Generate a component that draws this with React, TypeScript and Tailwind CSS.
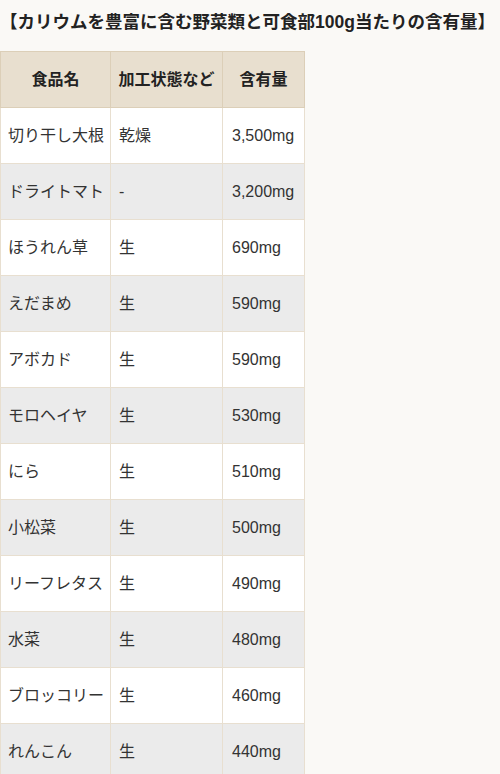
const rows: [string, string, string][] = [
  ["切り干し大根", "乾燥", "3,500mg"],
  ["ドライトマト", "-", "3,200mg"],
  ["ほうれん草", "生", "690mg"],
  ["えだまめ", "生", "590mg"],
  ["アボカド", "生", "590mg"],
  ["モロヘイヤ", "生", "530mg"],
  ["にら", "生", "510mg"],
  ["小松菜", "生", "500mg"],
  ["リーフレタス", "生", "490mg"],
  ["水菜", "生", "480mg"],
  ["ブロッコリー", "生", "460mg"],
  ["れんこん", "生", "440mg"],
];

export default function App() {
  return (
    <div className="h-[774px] overflow-hidden bg-[#faf9f6] font-['Liberation_Sans','Noto_Sans_CJK_JP',sans-serif] text-[#333]">
      <h2 className="pt-[9px] text-[17.5px] font-bold leading-[26px] text-[#222] whitespace-nowrap">
        【カリウムを豊富に含む野菜類と可食部100g当たりの含有量】
      </h2>
      <table className="mt-[16px] w-[304px] border-collapse text-[16px] table-fixed">
        <colgroup>
          <col className="w-[110px]" />
          <col className="w-[112px]" />
          <col className="w-[82px]" />
        </colgroup>
        <thead>
          <tr className="h-[56px] bg-[#e8dfcf]">
            <th className="border border-[#dccfb8] font-bold text-center text-[#222]">食品名</th>
            <th className="border border-[#dccfb8] font-bold text-center text-[#222]">加工状態など</th>
            <th className="border border-[#dccfb8] font-bold text-center text-[#222]">含有量</th>
          </tr>
        </thead>
        <tbody>
          {rows.map((r, i) => (
            <tr key={i} className={`h-[56px] ${i % 2 === 0 ? "bg-white" : "bg-[#ebebeb]"}`}>
              <td className="border border-[#e8dfd0] px-[7px] whitespace-nowrap">{r[0]}</td>
              <td className="border border-[#e8dfd0] px-[8px]">{r[1]}</td>
              <td className="border border-[#e8dfd0] px-[9px]">{r[2]}</td>
            </tr>
          ))}
        </tbody>
      </table>
    </div>
  );
}
